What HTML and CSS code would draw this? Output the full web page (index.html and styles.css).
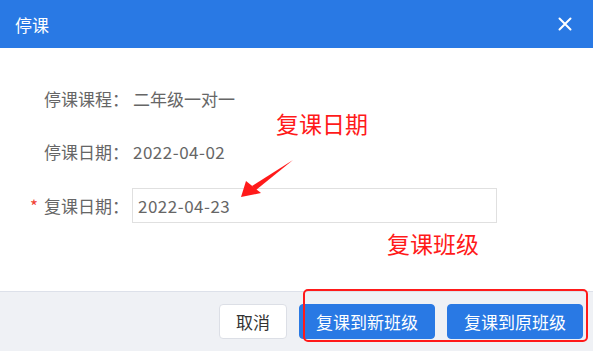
FILE: index.html
```html
<!DOCTYPE html>
<html>
<head>
    <meta charset="utf-8">
    <title>停课</title>
    <link rel="stylesheet" href="styles.css">
</head>
<body>
    <div class="dialog">
        <div class="dialog-header">
            <span class="dialog-title">停课</span>
            <span class="dialog-close">
                <svg width="14" height="14" viewBox="0 0 14 14"><path d="M1.5 1.5 L12.5 12.5 M12.5 1.5 L1.5 12.5" stroke="#fff" stroke-width="2" stroke-linecap="round"/></svg>
            </span>
        </div>
        <div class="dialog-body">
            <div class="form-row">
                <span class="form-label">停课课程：</span>
                <span class="form-value">二年级一对一</span>
            </div>
            <div class="form-row">
                <span class="form-label">停课日期：</span>
                <span class="form-value num">2022-04-02</span>
            </div>
            <div class="form-row">
                <span class="form-label"><i class="required">*</i>复课日期：</span>
                <input class="form-input num" type="text" value="2022-04-23">
            </div>

            <span class="note note-date">复课日期</span>
            <span class="note note-class">复课班级</span>
            <svg class="note-arrow" width="70" height="50" viewBox="0 0 70 50">
                <path d="M63 2 L22 28 L26 32 Z" fill="#ff1a1a"/>
                <path d="M11 39 L16 23 L31 35 Z" fill="#ff1a1a"/>
            </svg>
        </div>
        <div class="dialog-footer">
            <button class="btn btn-default">取消</button>
            <button class="btn btn-primary">复课到新班级</button>
            <button class="btn btn-primary">复课到原班级</button>
            <div class="note-box"></div>
        </div>
    </div>
</body>
</html>
```

FILE: styles.css
```css
body {
    margin: 0;
    font-family: "Noto Sans CJK SC", "Noto Sans", sans-serif;
    font-size: 17px;
    color: #666;
    background-color: #fff;
}
.dialog {
    width: 593px;
    height: 351px;
    display: flex;
    flex-direction: column;
}
.dialog-header {
    height: 48px;
    background-color: #2979e4;
    color: #fff;
    display: flex;
    align-items: center;
    justify-content: space-between;
    padding: 0 21px 0 15px;
}
.dialog-title {
    font-size: 17px;
}
.dialog-close {
    display: flex;
}
.dialog-body {
    flex: 1;
    position: relative;
    padding-top: 32px;
}
.form-row {
    display: flex;
    align-items: center;
    height: 36px;
    margin-bottom: 17px;
}
.form-row:nth-child(2) {
    margin-bottom: 18px;
}
.form-label {
    width: 129px;
    text-align: right;
    flex-shrink: 0;
}
.required {
    font-style: normal;
    color: #f04134;
    margin-right: 6px;
}
.form-value {
    margin-left: 4px;
}
.num {
    letter-spacing: 0.5px;
}
.form-input {
    margin-left: 3px;
    width: 365px;
    height: 35px;
    box-sizing: border-box;
    border: 1px solid #e0e0e0;
    padding: 0 5px;
    font-family: inherit;
    font-size: 17px;
    color: #666;
    outline: none;
}
.note {
    position: absolute;
    color: #ff1a1a;
    font-size: 23px;
    line-height: 1;
}
.note-date {
    left: 276px;
    top: 64px;
}
.note-class {
    left: 387px;
    top: 184px;
}
.note-arrow {
    position: absolute;
    left: 230px;
    top: 110px;
}
.dialog-footer {
    position: relative;
    height: 60px;
    border-top: 1px solid #dde1ea;
    background-color: #eff1f5;
    display: flex;
    justify-content: flex-end;
    align-items: flex-start;
    gap: 12px;
    padding: 12px 10px 0 0;
    box-sizing: border-box;
}
.btn {
    height: 35px;
    border-radius: 4px;
    font-family: inherit;
    font-size: 17px;
    padding: 0 16px;
    cursor: pointer;
}
.btn-default {
    background-color: #fff;
    border: 1px solid #dcdfe6;
    color: #333;
}
.btn-primary {
    background-color: #2979e4;
    border: 1px solid #2979e4;
    color: #fff;
    width: 136px;
}
.note-box {
    position: absolute;
    left: 303px;
    top: -3px;
    width: 285px;
    height: 53px;
    box-sizing: border-box;
    border: 2.5px solid #ff1a1a;
    border-radius: 5px;
}
```
